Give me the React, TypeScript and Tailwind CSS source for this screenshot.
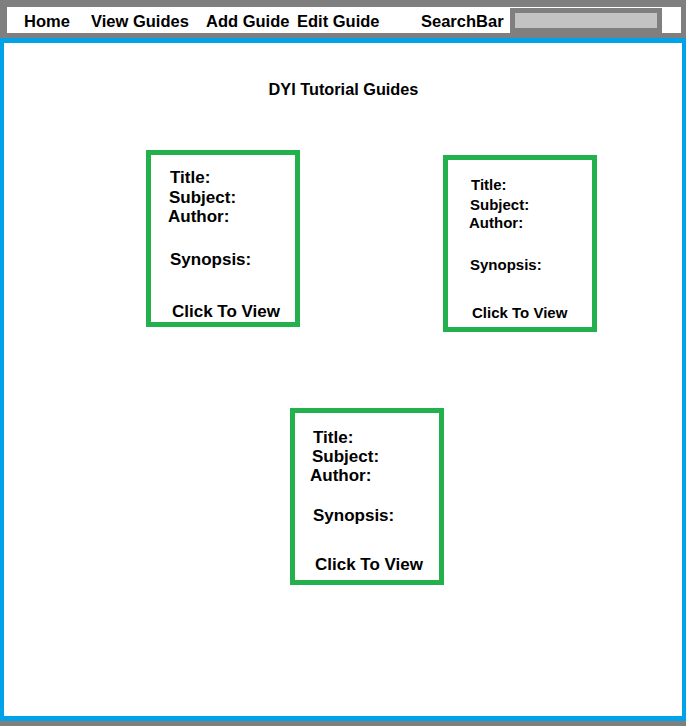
import React from 'react';

// wireframe: nav bar, page title, three guide cards

const NAV_ITEMS: { label: string; width: string }[] = [
  { label: 'Home', width: 'w-[67px]' },
  { label: 'View Guides', width: 'w-[115px]' },
  { label: 'Add Guide', width: 'w-[91px]' },
  { label: 'Edit Guide', width: 'w-[124px]' },
  { label: 'SearchBar', width: 'w-[89px]' },
];

interface CardLine {
  text: string;
  cls: string;
}

interface GuideCardProps {
  wrap: string;
  inner: string;
  lines: CardLine[];
}

const GuideCard: React.FC<GuideCardProps> = ({ wrap, inner, lines }) => (
  <div className={`w-[154px] h-[177px] shrink-0 border-[5px] border-[#22b14c] bg-white ${wrap}`}>
    <div className={`flex flex-col font-bold text-black ${inner}`}>
      {lines.map((l) => (
        <div key={l.text} className={`whitespace-nowrap ${l.cls}`}>
          {l.text}
        </div>
      ))}
    </div>
  </div>
);

const App: React.FC = () => {
  return (
    <div
      className="w-[686px] h-[726px] bg-[#7f7f7f] overflow-hidden"
      style={{ fontFamily: '"Liberation Sans", Arial, sans-serif' }}
    >
      {/* Nav */}
      <div className="pl-[7px] pr-[5px] pt-[7px] pb-[5px]">
        <div className="h-[26px] bg-white flex items-start pl-[17px] text-[16.5px] font-bold text-black">
          {NAV_ITEMS.map((item) => (
            <span key={item.label} className={`${item.width} leading-[26px] pt-[1px] whitespace-nowrap`}>
              {item.label}
            </span>
          ))}
          <div className="mt-[1px] w-[152px] h-[25px] border-[5px] border-[#7f7f7f] bg-[#c3c3c3]" />
        </div>
      </div>

      {/* Main */}
      <div className="h-[683px] bg-white border-x-4 border-y-[5px] border-[#00a2e8] flex flex-col">
        <h1 className="mt-[36px] text-center text-[16.3px] leading-[20px] font-bold text-black pl-[1px]">
          DYI Tutorial Guides
        </h1>

        <div className="mt-[51px] flex items-start pl-[142px] gap-[143px]">
          <GuideCard
            wrap=""
            inner="pt-[13px] text-[17px] leading-[20px]"
            lines={[
              { text: 'Title:', cls: 'pl-[19px]' },
              { text: 'Subject:', cls: 'pl-[18px]' },
              { text: 'Author:', cls: 'pl-[17px] -mt-[1px]' },
              { text: 'Synopsis:', cls: 'pl-[19px] mt-[23px]' },
              { text: 'Click To View', cls: 'pl-[21px] mt-[32px]' },
            ]}
          />
          <GuideCard
            wrap="mt-[5px]"
            inner="pt-[16px] text-[15px] leading-[18px]"
            lines={[
              { text: 'Title:', cls: 'pl-[23px]' },
              { text: 'Subject:', cls: 'pl-[22px] mt-[2px]' },
              { text: 'Author:', cls: 'pl-[21px]' },
              { text: 'Synopsis:', cls: 'pl-[22px] mt-[24px]' },
              { text: 'Click To View', cls: 'pl-[24px] mt-[30px]' },
            ]}
          />
        </div>

        <div className="mt-[76px] flex pl-[286px]">
          <GuideCard
            wrap=""
            inner="pt-[15px] text-[17px] leading-[20px]"
            lines={[
              { text: 'Title:', cls: 'pl-[18px]' },
              { text: 'Subject:', cls: 'pl-[17px] -mt-[1px]' },
              { text: 'Author:', cls: 'pl-[15px] -mt-[1px]' },
              { text: 'Synopsis:', cls: 'pl-[18px] mt-[20px]' },
              { text: 'Click To View', cls: 'pl-[20px] mt-[29px]' },
            ]}
          />
        </div>
      </div>
    </div>
  );
};

export default App;
